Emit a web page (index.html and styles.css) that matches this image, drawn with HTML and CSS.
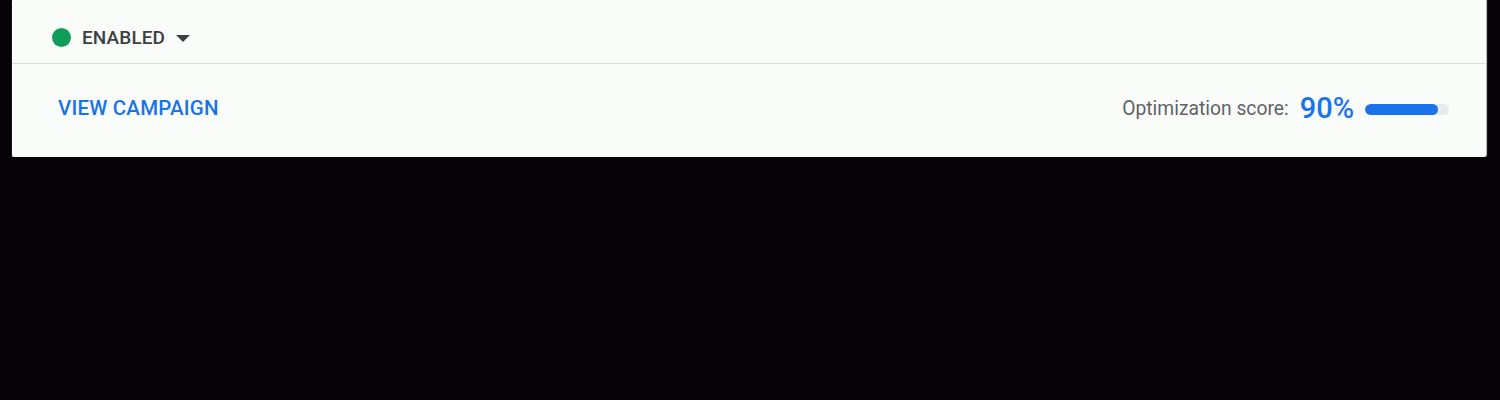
FILE: index.html
```html
<!DOCTYPE html>
<html>
<head>
<meta charset="utf-8">
<link rel="stylesheet" href="styles.css">
</head>
<body>
<div class="card">
  <div class="card-top">
    <div class="status">
      <span class="dot"></span>
      <span class="status-label">ENABLED</span>
      <svg class="caret" width="16" height="8" viewBox="0 0 16 8"><path d="M1 1 L15 1 L8 8 Z" fill="#3c4043"/></svg>
    </div>
  </div>
  <div class="card-bottom">
    <a class="view-link">VIEW CAMPAIGN</a>
    <div class="score">
      <span class="score-label">Optimization score:</span>
      <span class="score-value">90%</span>
      <div class="bar"><div class="bar-fill" style="width:87%"></div></div>
    </div>
  </div>
</div>
</body>
</html>
```

FILE: styles.css
```css
html, body {
  margin: 0;
  padding: 0;
  background: #050306;
  font-family: Roboto, "Liberation Sans", Arial, sans-serif;
}
.card {
  margin-left: 12px;
  width: 1474px;
  background: #fafcfa;
  border-radius: 0 0 3px 3px;
  box-shadow: 0 1px 1px #c8cacd, 1px 0 1px #c8cacd;
}
.card-top {
  height: 64px;
  box-sizing: border-box;
  padding: 24px 0 0 40px;
  border-bottom: 1px solid #dadce0;
}
.status {
  display: flex;
  align-items: center;
  height: 26px;
}
.dot {
  width: 19px;
  height: 19px;
  border-radius: 50%;
  background: #0f9d58;
  margin-right: 11px;
}
.status-label {
  font-size: 19px;
  font-weight: 500;
  color: #3c4043;
  letter-spacing: 0.1px;
}
.caret {
  margin-left: 10px;
  margin-top: 2px;
}
.card-bottom {
  height: 93px;
  box-sizing: border-box;
  display: flex;
  align-items: center;
  justify-content: space-between;
  padding: 0 37px 5px 46px;
}
.view-link {
  font-size: 20.5px;
  font-weight: 500;
  color: #1a73e8;
  letter-spacing: 0.2px;
}
.score {
  display: flex;
  align-items: center;
}
.score-label {
  font-size: 19.3px;
  color: #5f6368;
}
.score-value {
  font-size: 29px;
  font-weight: 500;
  color: #1a73e8;
  margin-left: 11px;
  margin-right: 11px;
}
.bar {
  width: 84px;
  height: 11px;
  border-radius: 6px;
  background: #e8eaed;
  overflow: hidden;
  margin-top: 2px;
}
.bar-fill {
  height: 100%;
  background: #1a73e8;
  border-radius: 6px;
}
```
